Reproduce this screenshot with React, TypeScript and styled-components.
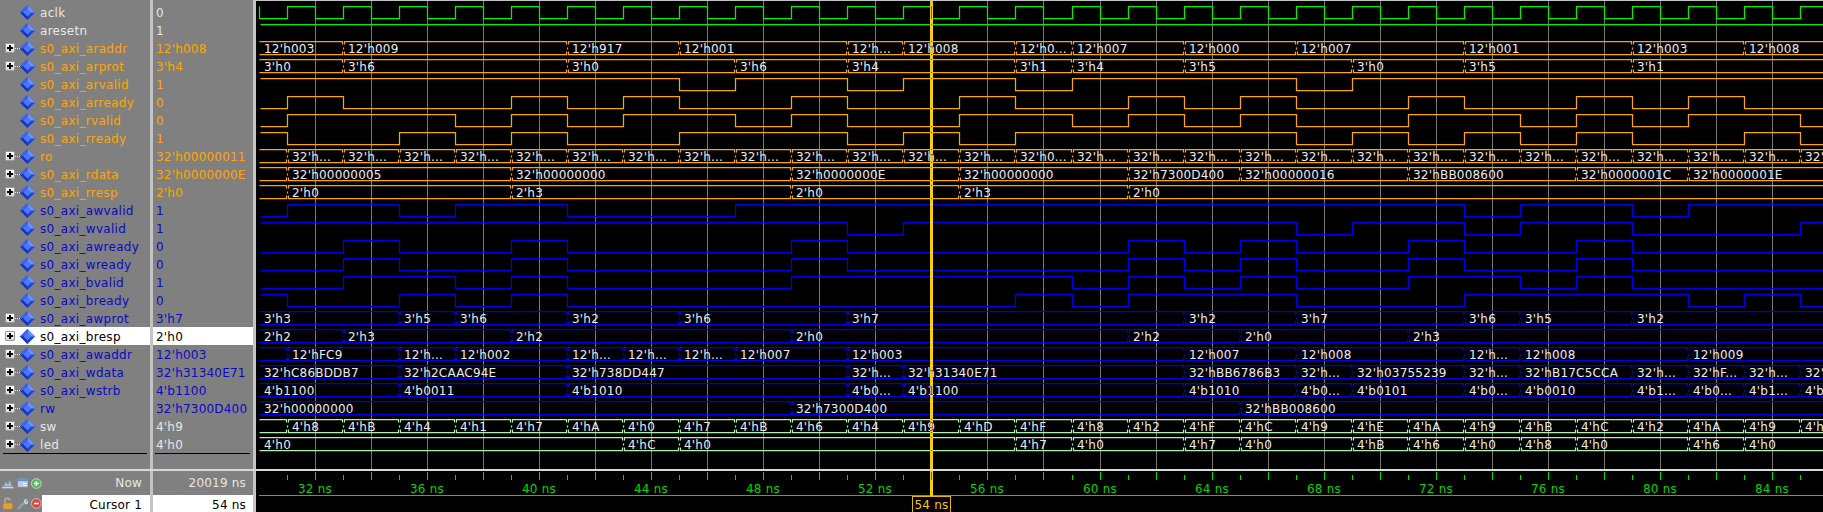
import React from 'react';
import styled, {createGlobalStyle} from 'styled-components';

type Tone = 'clock' | 'read' | 'write' | 'io';
type Change = [number, string];

interface BitSignal {
    kind: 'bit';
    name: string;
    value: string;
    tone: Tone;
    high: boolean;
    edges: number[];
}
interface BusSignal {
    kind: 'bus';
    name: string;
    value: string;
    tone: Tone;
    first: string;
    changes: Change[];
    selected?: boolean;
}
type Signal = BitSignal | BusSignal;

const every2 = (from: number, to: number): number[] => {
    const out: number[] = [];
    for (let t = from; t <= to; t += 2) out.push(t);
    return out;
};

const roChanges: Change[] = every2(31, 85).map((t) => [t, t === 57 ? "32'h0..." : "32'h..."] as Change);

const swLabels = '8B417A07B649DF82FC9EA9BC2A9'.split('');
const swChanges: Change[] = every2(31, 83).map((t, i) => [t, `4'h${swLabels[i]}`] as Change);
swChanges.push([85, "4'h..."]);

const signals: Signal[] = [
    {kind: 'bit', name: 'aclk', value: '0', tone: 'clock', high: false, edges: every2(31, 85).flatMap((t) => [t, t + 1])},
    {kind: 'bit', name: 'aresetn', value: '1', tone: 'clock', high: true, edges: []},
    {kind: 'bus', name: 's0_axi_araddr', value: "12'h008", tone: 'read', first: "12'h003", changes: [[33, "12'h009"], [41, "12'h917"], [45, "12'h001"], [51, "12'h..."], [53, "12'h008"], [57, "12'h0..."], [59, "12'h007"], [63, "12'h000"], [67, "12'h007"], [73, "12'h001"], [79, "12'h003"], [83, "12'h008"]]},
    {kind: 'bus', name: 's0_axi_arprot', value: "3'h4", tone: 'read', first: "3'h0", changes: [[33, "3'h6"], [41, "3'h0"], [47, "3'h6"], [51, "3'h4"], [57, "3'h1"], [59, "3'h4"], [63, "3'h5"], [69, "3'h0"], [73, "3'h5"], [79, "3'h1"]]},
    {kind: 'bit', name: 's0_axi_arvalid', value: '1', tone: 'read', high: true, edges: [45, 47, 51, 53, 57, 59, 67, 69]},
    {kind: 'bit', name: 's0_axi_arready', value: '0', tone: 'read', high: false, edges: [31, 33, 39, 41, 43, 45, 49, 51, 55, 57, 61, 63, 65, 67, 71, 73, 77, 79, 81, 83]},
    {kind: 'bit', name: 's0_axi_rvalid', value: '0', tone: 'read', high: false, edges: [31, 37, 39, 41, 43, 47, 49, 51, 55, 59, 61, 63, 65, 67, 71, 75, 77, 79, 81, 85]},
    {kind: 'bit', name: 's0_axi_rready', value: '1', tone: 'read', high: true, edges: [31, 35, 37, 39, 41, 45, 51, 53, 55, 57, 67, 69, 71, 73, 75, 77, 79, 83, 85]},
    {kind: 'bus', name: 'ro', value: "32'h00000011", tone: 'read', first: '', changes: roChanges},
    {kind: 'bus', name: 's0_axi_rdata', value: "32'h0000000E", tone: 'read', first: '', changes: [[31, "32'h00000005"], [39, "32'h00000000"], [49, "32'h0000000E"], [55, "32'h00000000"], [61, "32'h7300D400"], [65, "32'h00000016"], [71, "32'hBB008600"], [77, "32'h0000001C"], [81, "32'h0000001E"]]},
    {kind: 'bus', name: 's0_axi_rresp', value: "2'h0", tone: 'read', first: '', changes: [[31, "2'h0"], [39, "2'h3"], [49, "2'h0"], [55, "2'h3"], [61, "2'h0"]]},
    {kind: 'bit', name: 's0_axi_awvalid', value: '1', tone: 'write', high: false, edges: [31, 35, 37, 41, 47, 73, 75, 79, 81]},
    {kind: 'bit', name: 's0_axi_wvalid', value: '1', tone: 'write', high: true, edges: [51, 53, 67, 69, 73, 75, 79, 85]},
    {kind: 'bit', name: 's0_axi_awready', value: '0', tone: 'write', high: false, edges: [33, 35, 39, 41, 49, 51, 61, 63, 65, 67, 71, 73, 77, 79]},
    {kind: 'bit', name: 's0_axi_wready', value: '0', tone: 'write', high: false, edges: [33, 35, 39, 41, 49, 51, 61, 63, 65, 67, 71, 73, 77, 79]},
    {kind: 'bit', name: 's0_axi_bvalid', value: '1', tone: 'write', high: false, edges: [33, 37, 39, 41, 49, 59, 61, 63, 65, 67, 71, 75, 77, 79]},
    {kind: 'bit', name: 's0_axi_bready', value: '0', tone: 'write', high: true, edges: [31, 35, 37, 39, 41, 57, 59, 61, 67, 73, 81, 83, 85]},
    {kind: 'bus', name: 's0_axi_awprot', value: "3'h7", tone: 'write', first: "3'h3", changes: [[35, "3'h5"], [37, "3'h6"], [41, "3'h2"], [45, "3'h6"], [51, "3'h7"], [63, "3'h2"], [67, "3'h7"], [73, "3'h6"], [75, "3'h5"], [79, "3'h2"]]},
    {kind: 'bus', name: 's0_axi_bresp', value: "2'h0", tone: 'write', selected: true, first: "2'h2", changes: [[33, "2'h3"], [39, "2'h2"], [49, "2'h0"], [61, "2'h2"], [65, "2'h0"], [71, "2'h3"]]},
    {kind: 'bus', name: 's0_axi_awaddr', value: "12'h003", tone: 'write', first: '', changes: [[31, "12'hFC9"], [35, "12'h..."], [37, "12'h002"], [41, "12'h..."], [43, "12'h..."], [45, "12'h..."], [47, "12'h007"], [51, "12'h003"], [63, "12'h007"], [67, "12'h008"], [73, "12'h..."], [75, "12'h008"], [81, "12'h009"]]},
    {kind: 'bus', name: 's0_axi_wdata', value: "32'h31340E71", tone: 'write', first: "32'hC86BDDB7", changes: [[35, "32'h2CAAC94E"], [41, "32'h738DD447"], [51, "32'h..."], [53, "32'h31340E71"], [63, "32'hBB6786B3"], [67, "32'h..."], [69, "32'h03755239"], [73, "32'h..."], [75, "32'hB17C5CCA"], [79, "32'h..."], [81, "32'hF..."], [83, "32'h..."], [85, "32'h..."]]},
    {kind: 'bus', name: 's0_axi_wstrb', value: "4'b1100", tone: 'write', first: "4'b1100", changes: [[35, "4'b0011"], [41, "4'b1010"], [51, "4'b0..."], [53, "4'b1100"], [63, "4'b1010"], [67, "4'b0..."], [69, "4'b0101"], [73, "4'b0..."], [75, "4'b0010"], [79, "4'b1..."], [81, "4'b0..."], [83, "4'b1..."], [85, "4'b..."]]},
    {kind: 'bus', name: 'rw', value: "32'h7300D400", tone: 'write', first: "32'h00000000", changes: [[49, "32'h7300D400"], [65, "32'hBB008600"]]},
    {kind: 'bus', name: 'sw', value: "4'h9", tone: 'io', first: '', changes: swChanges},
    {kind: 'bus', name: 'led', value: "4'h0", tone: 'io', first: "4'h0", changes: [[43, "4'hC"], [45, "4'h0"], [57, "4'h7"], [59, "4'h0"], [63, "4'h7"], [65, "4'h0"], [69, "4'hB"], [71, "4'h6"], [73, "4'h0"], [75, "4'h8"], [77, "4'h0"], [81, "4'h6"], [83, "4'h0"]]},
];

const textColor: Record<Tone, string> = {clock: '#e6e6e6', read: '#ffa500', write: '#0a0ac4', io: '#e6e6e6'};
const waveColor: Record<Tone, string> = {clock: '#00f000', read: '#ffa500', write: '#0000e8', io: '#aaf5aa'};
const crossColor: Record<Tone, string> = {clock: '#ff2000', read: '#007020', write: '#ffffff', io: '#4040e0'};

// 28px per ns, the viewer gains a pixel around 59 ns
const xAt = (t: number) => 315 + 28 * (t - 32) + (t >= 59 ? 1 : 0);
const START = 259;
const END = 1823;
const CURSOR = xAt(54);

const bitPath = (row: number, sig: BitSignal) => {
    const hi = 6.5 + 18 * row;
    const lo = 18.5 + 18 * row;
    let level = sig.high;
    let d = `M${START + 1.5} ${level ? hi : lo}`;
    if (sig.name === 'aclk') d = `M${START + 0.5} ${hi}L${START + 0.5} ${lo}`;
    sig.edges.forEach((t) => {
        const x = xAt(t) + 0.5;
        if (x > END) return;
        d += `L${x} ${level ? hi : lo}`;
        level = !level;
        d += `L${x} ${level ? hi : lo}`;
    });
    return d + `L${END} ${level ? hi : lo}`;
};

const busPath = (row: number, sig: BusSignal) => {
    const top = 5.5 + 18 * row;
    const bot = 18.5 + 18 * row;
    const mid = 12.5 + 18 * row;
    const xs = [START, ...sig.changes.map((c) => xAt(c[0])), END + 4];
    let d = '';
    for (let i = 0; i < xs.length - 1; i++) {
        const a = xs[i] + (i === 0 ? 0.5 : 1.5);
        const b = xs[i + 1] - 0.5;
        if (i === 0) {
            d += `M${a} ${top}L${b} ${top}L${b} ${top + 3}M${a} ${bot}L${b} ${bot}L${b} ${bot - 3}M${b + 1} ${mid - 1}L${b + 1} ${mid + 1}`;
        } else {
            d += `M${a} ${top + 3}L${a} ${top}L${b} ${top}L${b} ${top + 3}M${a} ${bot - 3}L${a} ${bot}L${b} ${bot}L${b} ${bot - 3}M${b + 1} ${mid - 1}L${b + 1} ${mid + 1}`;
        }
    }
    return d;
};

const levelAt = (sig: BitSignal, t: number) => {
    const passed = sig.edges.filter((e) => e <= t).length;
    return passed % 2 === 0 ? sig.high : !sig.high;
};

const busLabels = signals.flatMap((sig, row) => {
    if (sig.kind !== 'bus') return [];
    const out: {x: number; y: number; text: string}[] = [];
    const y = 16.5 + 18 * row;
    if (sig.first) out.push({x: START + 5, y, text: sig.first});
    sig.changes.forEach((c) => out.push({x: xAt(c[0]) + 5, y, text: c[1]}));
    return out;
});

const gridTimes = every2(32, 84);
const tickTimes = every2(31, 85).filter((t) => xAt(t) < END);
const labelTimes = gridTimes.filter((t) => t % 4 === 0);

const GlobalStyle = createGlobalStyle`
    html, body {
        margin: 0;
        padding: 0;
        background: #000000;
    }
`;

const Page = styled.div`
    width: 1823px;
    height: 512px;
    overflow: hidden;
    display: flex;
    flex-direction: column;
    background: #c4c4c4;
    font-family: "DejaVu Sans", sans-serif;
    font-size: 12px;
    letter-spacing: 0.2px;
`;

const Upper = styled.div`
    height: 469px;
    flex: none;
    display: grid;
    grid-template-columns: 150px 100px 1567px;
    column-gap: 3px;
`;

const SidePane = styled.div`
    background: #808080;
    padding-top: 3px;
`;

const EndRule = styled.div<{$inset: number}>`
    height: 1px;
    background: #000000;
    margin: 0 3px 0 ${(p) => p.$inset}px;
`;

const NameRow = styled.div<{$selected?: boolean}>`
    height: 18px;
    display: flex;
    align-items: center;
    background: ${(p) => (p.$selected ? '#ffffff' : 'transparent')};
`;

const Gutter = styled.div`
    width: 20px;
    flex: none;
    display: flex;
    align-items: center;
    padding-left: 5px;
    box-sizing: border-box;
`;

const Expander = styled.span`
    width: 10px;
    height: 10px;
    flex: none;
    box-sizing: border-box;
    position: relative;
    border: 1px solid #9a9a9a;
    border-radius: 1px;
    background: linear-gradient(#ffffff, #d4dae2);
    &::before {
        content: '';
        position: absolute;
        left: 1px;
        top: 3px;
        width: 6px;
        height: 2px;
        background: #000000;
    }
    &::after {
        content: '';
        position: absolute;
        left: 3px;
        top: 1px;
        width: 2px;
        height: 6px;
        background: #000000;
    }
`;

const Connector = styled.span`
    width: 5px;
    flex: none;
    border-top: 1px dotted #e2e2e2;
`;

const SignalName = styled.span<{$color: string}>`
    margin-left: 5px;
    padding-top: 2px;
    white-space: nowrap;
    letter-spacing: 0.3px;
    color: ${(p) => p.$color};
`;

const ValueRow = styled.div<{$selected?: boolean}>`
    height: 18px;
    line-height: 20px;
    padding-left: 3px;
    white-space: nowrap;
    background: ${(p) => (p.$selected ? '#ffffff' : 'transparent')};
`;

const ValueText = styled.span<{$color: string}>`
    color: ${(p) => p.$color};
`;

const WavePane = styled.div`
    background: #000000;
    border-top: 1px solid #c4c4c4;
    box-sizing: border-box;
    overflow: hidden;
`;

const WaveCanvas = styled.svg`
    display: block;
    font-family: "DejaVu Sans", sans-serif;
    font-size: 12px;
    letter-spacing: 0.2px;
`;

const Trace = styled.path`
    fill: none;
    stroke-width: 1.25;
`;

const Divider = styled.div`
    height: 2px;
    flex: none;
    background: #d8d8d8;
`;

const Lower = styled.div`
    flex: 1;
    display: grid;
    grid-template-columns: 150px 100px 1567px;
    column-gap: 3px;
    min-height: 0;
`;

const SummaryNames = styled.div`
    background: #808080;
    display: flex;
    flex-direction: column;
`;

const SummaryRow = styled.div`
    height: 24px;
    flex: none;
    display: flex;
    align-items: center;
`;

const CursorRow = styled.div`
    flex: 1;
    display: flex;
    align-items: center;
`;

const ToolIcons = styled.div`
    width: 42px;
    flex: none;
    height: 100%;
    display: flex;
    align-items: center;
    gap: 3px;
    padding-left: 2px;
    box-sizing: border-box;
`;

const SummaryLabel = styled.div<{$light?: boolean}>`
    flex: 1;
    height: 100%;
    display: flex;
    align-items: center;
    justify-content: flex-end;
    padding: ${(p) => (p.$light ? '0' : '2px')} 8px 0 0;
    box-sizing: border-box;
    color: ${(p) => (p.$light ? '#e6e6e6' : '#000000')};
    background: ${(p) => (p.$light ? 'transparent' : '#ffffff')};
`;

const SummaryValues = styled.div`
    background: #808080;
    display: flex;
    flex-direction: column;
`;

const NowValue = styled.div`
    height: 24px;
    flex: none;
    display: flex;
    align-items: center;
    justify-content: flex-end;
    padding-right: 7px;
    color: #e6e6e6;
`;

const CursorValue = styled.div`
    flex: 1;
    display: flex;
    align-items: center;
    justify-content: flex-end;
    padding: 2px 7px 0 0;
    color: #000000;
    background: #ffffff;
`;

const Ruler = styled.div`
    position: relative;
    background: #000000;
`;

const CursorFlag = styled.div`
    position: absolute;
    left: 656px;
    top: 25px;
    width: 39px;
    height: 17px;
    box-sizing: border-box;
    border: 1px solid #e6b800;
    color: #ffc400;
    text-align: center;
    line-height: 16px;
    background: #000000;
`;

const Diamond: React.FunctionComponent = () => (
    <svg width="15" height="15" viewBox="0 0 15 15" style={{flex: 'none'}}>
        <polygon points="7.5,0 15,7.5 7.5,15 0,7.5" fill="#1e3fd0" />
        <polygon points="7.5,0 15,7.5 7.5,7.5" fill="#6d97ff" />
        <polygon points="7.5,0 0,7.5 7.5,7.5" fill="#3a62ea" />
        <polygon points="0,7.5 7.5,15 7.5,7.5" fill="#1a34b4" />
        <polygon points="7.5,3.5 11.5,7.5 7.5,11.5 3.5,7.5" fill="#4a78f6" />
    </svg>
);

const ChartIcon = () => (
    <svg width="12" height="12" viewBox="0 0 12 12">
        <path d="M1 10 L4 4 L6 7 L8 2 L11 10 Z" fill="#aab6c6" stroke="#6e7f96" strokeWidth="0.7" />
        <rect x="0" y="10" width="12" height="1.5" fill="#c9d2de" />
    </svg>
);

const WindowIcon = () => (
    <svg width="12" height="12" viewBox="0 0 12 12">
        <rect x="0.5" y="1.5" width="11" height="9" rx="1" fill="#b8cce6" stroke="#6f8fb8" />
        <rect x="1" y="2" width="10" height="2" fill="#5f8fd0" />
        <rect x="6" y="6" width="4" height="1" fill="#ffffff" />
        <rect x="6" y="8" width="4" height="1" fill="#ffffff" />
    </svg>
);

const AddIcon = () => (
    <svg width="11" height="11" viewBox="0 0 11 11">
        <circle cx="5.5" cy="5.5" r="5" fill="#55b858" stroke="#c6dcc6" />
        <path d="M3 5.5 H8 M5.5 3 V8" stroke="#ffffff" strokeWidth="1.5" />
    </svg>
);

const LockIcon = () => (
    <svg width="12" height="13" viewBox="0 0 12 13">
        <path d="M3 6 V3.5 A2.5 2.5 0 0 1 8 3.5" fill="none" stroke="#c8b898" strokeWidth="1.4" />
        <rect x="1" y="6" width="10" height="6.5" rx="1" fill="#e0a040" stroke="#b87820" strokeWidth="0.6" />
    </svg>
);

const WrenchIcon = () => (
    <svg width="12" height="12" viewBox="0 0 12 12">
        <path d="M1.5 10.5 L7 5" stroke="#8aa4c8" strokeWidth="2.2" strokeLinecap="round" />
        <path d="M7 2.5 A2.6 2.6 0 0 1 10.8 1.6 L9 3.4 L9.6 4 L11.4 2.4 A2.6 2.6 0 0 1 8 6 Z" fill="#c2d0e2" />
    </svg>
);

const RemoveIcon = () => (
    <svg width="11" height="11" viewBox="0 0 11 11">
        <circle cx="5.5" cy="5.5" r="5" fill="#d84848" stroke="#e4bcbc" />
        <path d="M3 5.5 H8" stroke="#ffffff" strokeWidth="1.6" />
    </svg>
);

const Waves: React.FunctionComponent = () => {
    const marks: {y: number; color: string}[] = [];
    signals.forEach((sig, row) => {
        const color = crossColor[sig.tone];
        if (sig.kind === 'bit') {
            marks.push({y: (levelAt(sig, 54) ? 6 : 18) + 18 * row, color});
        } else {
            marks.push({y: 5 + 18 * row, color}, {y: 18 + 18 * row, color});
        }
    });
    return (
        <WaveCanvas width={1567} height={468} viewBox="256 1 1567 468">
            <defs>
                <clipPath id="cursor-band">
                    <rect x={CURSOR - 1} y={0} width={3} height={469} />
                </clipPath>
            </defs>
            {gridTimes.map((t) => (
                <line key={t} x1={xAt(t) + 0.5} x2={xAt(t) + 0.5} y1={0} y2={469} stroke="#787878" />
            ))}
            {signals.map((sig, row) => (
                <Trace
                    key={sig.name}
                    d={sig.kind === 'bit' ? bitPath(row, sig) : busPath(row, sig)}
                    stroke={waveColor[sig.tone]}
                />
            ))}
            {busLabels.map((l) => (
                <text key={`${l.x}-${l.y}`} x={l.x} y={l.y} fill="#ececec">{l.text}</text>
            ))}
            <rect x={CURSOR - 1} y={0} width={3} height={469} fill="#f5d000" />
            <rect x={CURSOR} y={6} width={1} height={13} fill="#ff2000" />
            {marks.map((m) => (
                <rect key={m.y} x={CURSOR} y={m.y} width={1} height={1} fill={m.color} />
            ))}
            <g clipPath="url(#cursor-band)">
                {busLabels.filter((l) => l.x > CURSOR - 70 && l.x < CURSOR).map((l) => (
                    <text key={`${l.x}-${l.y}`} x={l.x} y={l.y} fill="#7a46c8">{l.text}</text>
                ))}
            </g>
        </WaveCanvas>
    );
};

const TimeAxis: React.FunctionComponent = () => (
    <WaveCanvas width={1567} height={41} viewBox="256 471 1567 41">
        {tickTimes.map((t) => (
            <line key={t} x1={xAt(t) + 0.5} x2={xAt(t) + 0.5} y1={t % 2 === 0 ? 472 : 475} y2={480} stroke="#00e000" />
        ))}
        {gridTimes.map((t) => (
            <line key={t} x1={xAt(t) + 0.5} x2={xAt(t) + 0.5} y1={472} y2={480} stroke="#00e000" />
        ))}
        {labelTimes.map((t) => (
            <text key={t} x={xAt(t)} y={493} textAnchor="middle" fill="#00d400">{`${t} ns`}</text>
        ))}
        <line x1={START} x2={END} y1={495.5} y2={495.5} stroke="#808080" />
        <rect x={CURSOR - 1} y={471} width={3} height={25} fill="#f5d000" />
        <rect x={CURSOR} y={472} width={1} height={8} fill="#ff2000" />
    </WaveCanvas>
);

const App: React.FunctionComponent = () => {
    return (
        <Page>
            <GlobalStyle />
            <Upper>
                <SidePane>
                    {signals.map((sig) => (
                        <NameRow key={sig.name} $selected={sig.kind === 'bus' && sig.selected}>
                            <Gutter>
                                {sig.kind === 'bus' && (
                                    <>
                                        <Expander />
                                        <Connector />
                                    </>
                                )}
                            </Gutter>
                            <Diamond />
                            <SignalName $color={sig.kind === 'bus' && sig.selected ? '#000000' : textColor[sig.tone]}>
                                {sig.name}
                            </SignalName>
                        </NameRow>
                    ))}
                    <EndRule $inset={3} />
                </SidePane>
                <SidePane>
                    {signals.map((sig) => (
                        <ValueRow key={sig.name} $selected={sig.kind === 'bus' && sig.selected}>
                            <ValueText $color={sig.kind === 'bus' && sig.selected ? '#000000' : textColor[sig.tone]}>
                                {sig.value}
                            </ValueText>
                        </ValueRow>
                    ))}
                    <EndRule $inset={2} />
                </SidePane>
                <WavePane>
                    <Waves />
                </WavePane>
            </Upper>
            <Divider />
            <Lower>
                <SummaryNames>
                    <SummaryRow>
                        <ToolIcons>
                            <ChartIcon />
                            <WindowIcon />
                            <AddIcon />
                        </ToolIcons>
                        <SummaryLabel $light>Now</SummaryLabel>
                    </SummaryRow>
                    <CursorRow>
                        <ToolIcons>
                            <LockIcon />
                            <WrenchIcon />
                            <RemoveIcon />
                        </ToolIcons>
                        <SummaryLabel>Cursor 1</SummaryLabel>
                    </CursorRow>
                </SummaryNames>
                <SummaryValues>
                    <NowValue>20019 ns</NowValue>
                    <CursorValue>54 ns</CursorValue>
                </SummaryValues>
                <Ruler>
                    <TimeAxis />
                    <CursorFlag>54 ns</CursorFlag>
                </Ruler>
            </Lower>
        </Page>
    );
};

export default App;
